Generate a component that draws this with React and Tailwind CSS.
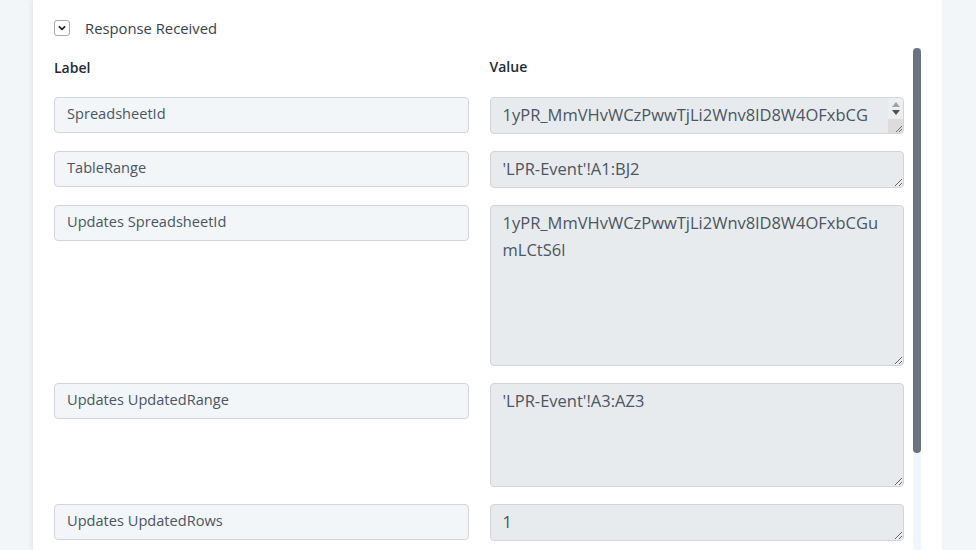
import React from 'react';

const rows = [
    { label: 'SpreadsheetId', value: '1yPR_MmVHvWCzPwwTjLi2Wnv8lD8W4OFxbCGumLCtS6l', h: 'h-[37px]', spin: true },
    { label: 'TableRange', value: "'LPR-Event'!A1:BJ2", h: 'h-[37px]' },
    { label: 'Updates SpreadsheetId', value: '1yPR_MmVHvWCzPwwTjLi2Wnv8lD8W4OFxbCGumLCtS6l', h: 'h-[161px]' },
    { label: 'Updates UpdatedRange', value: "'LPR-Event'!A3:AZ3", h: 'h-[104px]' },
    { label: 'Updates UpdatedRows', value: '1', h: 'h-[37px]' },
];

const App = () => {
    return (
        <div className="min-h-screen bg-[#f3f6f9] font-['Open_Sans',sans-serif]">
            <div className="ml-[33px] w-[909px] h-[550px] overflow-hidden bg-white shadow-[-2px_0_4px_rgba(0,0,0,0.06)] px-[21px] pt-5">
                <div className="flex items-center h-4">
                    <button className="w-4 h-4 flex items-center justify-center border border-[#a3aab5] rounded-[3px] bg-white">
                        <svg width="10" height="10" viewBox="0 0 10 10" fill="none">
                            <path d="M2.4 3.8 L5 6.3 L7.6 3.8" stroke="#1e293b" strokeWidth="1.8" strokeLinecap="round" strokeLinejoin="round" />
                        </svg>
                    </button>
                    <span className="ml-[15px] text-[14.8px] font-medium text-[#374151]">Response Received</span>
                </div>

                <div className="flex mt-3">
                    <div className="flex-1 pt-[9px]">
                        <div className="grid grid-cols-2 gap-x-[21px] h-5">
                            <div className="text-sm leading-5 font-semibold text-[#1f2937] pt-px">Label</div>
                            <div className="text-sm leading-5 font-semibold text-[#1f2937]">Value</div>
                        </div>
                        <div className="grid grid-cols-2 gap-x-[21px] gap-y-[17px] mt-5">
                            {rows.map((r) => (
                                <React.Fragment key={r.label}>
                                    <div className="h-9 border border-[#d1d5db] rounded bg-[#f3f6f9] px-3 pt-[5px] text-[14.6px] leading-5 font-medium text-[#4b5563]">
                                        {r.label}
                                    </div>
                                    <div className="relative">
                                        <textarea
                                            readOnly
                                            value={r.value}
                                            className={`${r.h} block w-full overflow-hidden border border-[#d1d5db] rounded bg-[#e8ebee] pl-3 ${r.spin ? 'pr-[27px]' : 'pr-3'} pt-[3px] text-[16.5px] leading-[27px] text-[#4b5563] outline-none`}
                                        />
                                        {r.spin && (
                                            <div className="absolute right-px top-px bottom-px w-[15px] flex flex-col rounded-tr rounded-br overflow-hidden">
                                                <div className="flex-1 bg-[#eceef0] flex flex-col items-center justify-center gap-[3px]">
                                                    <svg width="8" height="5" viewBox="0 0 8 5"><path d="M0 5 L4 0 L8 5 Z" fill="#a3a3a3" /></svg>
                                                    <svg width="8" height="5" viewBox="0 0 8 5"><path d="M0 0 L4 5 L8 0 Z" fill="#505050" /></svg>
                                                </div>
                                                <div className="h-[14px] bg-[#dcdcdc] flex items-end justify-end">
                                                    <svg width="10" height="10" viewBox="0 0 10 10">
                                                        <path d="M9 3 L3 9 M9 6 L6 9" stroke="#707070" strokeWidth="1" />
                                                    </svg>
                                                </div>
                                            </div>
                                        )}
                                    </div>
                                </React.Fragment>
                            ))}
                        </div>
                    </div>
                    <div className="ml-[9px] w-2 h-[600px] bg-[#eff6ff]">
                        <div className="h-[405px] rounded-full bg-[#6b7280]" />
                    </div>
                </div>
            </div>
        </div>
    );
};

export default App;
